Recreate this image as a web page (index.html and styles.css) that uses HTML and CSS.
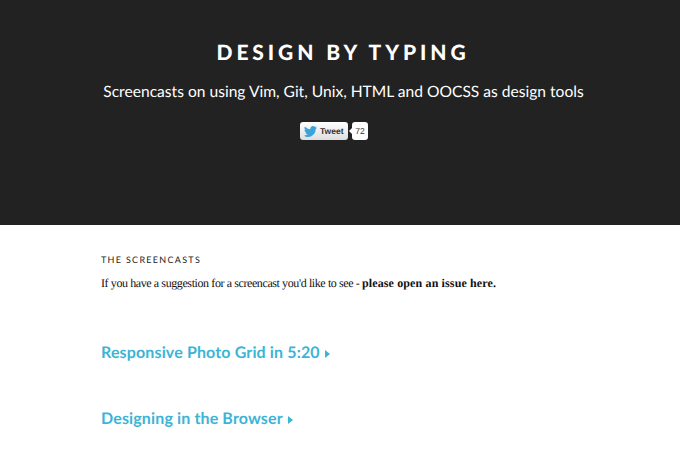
FILE: index.html
```html
<!DOCTYPE html>
<html lang="en">
<head>
    <meta charset="UTF-8">
    <title>Design by Typing</title>
    <link rel="stylesheet" href="styles.css">
</head>
<body>
    <header class="masthead">
        <h1 class="site-title">DESIGN BY TYPING</h1>
        <p class="site-tagline">Screencasts on using Vim, Git, Unix, HTML and OOCSS as design tools</p>
        <div class="share">
            <a class="tweet-btn" href="#">
                <svg class="tweet-bird" viewBox="0 0 24 20" width="13" height="11"><path d="M24 2.4c-.9.4-1.8.7-2.8.8 1-.6 1.8-1.6 2.2-2.7-1 .6-2 1-3.1 1.2C19.300.7 18 0 16.600 0c-2.700 0-4.900 2.200-4.900 4.900 0 .4 0 .8.100 1.100C7.700 5.800 4.100 3.900 1.700.9 1.300 1.600 1 2.500 1 3.400c0 1.700.9 3.200 2.200 4.100-.8 0-1.600-.2-2.200-.6v.1c0 2.400 1.700 4.400 3.900 4.800-.4.100-.8.200-1.300.2-.3 0-.6 0-.9-.1.600 2 2.400 3.400 4.600 3.400-1.700 1.300-3.800 2.100-6.100 2.100-.4 0-.8 0-1.200-.1C2.200 19.300 4.800 20 7.500 20c9.100 0 14-7.500 14-14v-.6c1-.7 1.800-1.600 2.500-3z"/></svg>
                Tweet
            </a>
            <span class="tweet-count">72</span>
        </div>
    </header>

    <main class="content">
        <h2 class="section-label">THE SCREENCASTS</h2>
        <p class="intro">If you have a suggestion for a screencast you'd like to see - <a href="#">please open an issue here.</a></p>

        <ul class="casts">
            <li><a href="#">Responsive Photo Grid in 5:20<span class="arrow"></span></a></li>
            <li><a href="#">Designing in the Browser<span class="arrow"></span></a></li>
        </ul>
    </main>
</body>
</html>
```

FILE: styles.css
```css
html, body {
    margin: 0;
    padding: 0;
}
body {
    background: #fff;
    overflow: hidden;
    font-family: Lato, "Open Sans", sans-serif;
    text-rendering: geometricPrecision;
}
.masthead {
    height: 225px;
    box-sizing: border-box;
    padding-top: 40px;
    background: #222222;
    color: #fff;
    text-align: center;
}
.site-title {
    margin: 0;
    padding-left: 6px;
    font-size: 21px;
    line-height: 26px;
    font-weight: 900;
    letter-spacing: 3.9px;
}
.site-tagline {
    margin: 14px 0 0;
    padding-left: 7px;
    font-size: 15.6px;
    line-height: 24px;
}
.share {
    display: flex;
    justify-content: center;
    align-items: center;
    gap: 4px;
    margin-top: 18px;
    padding-right: 12px;
}
.tweet-btn {
    display: flex;
    align-items: center;
    gap: 3px;
    width: 48px;
    height: 18px;
    box-sizing: border-box;
    padding-left: 4px;
    border-radius: 3px;
    background: linear-gradient(#ffffff, #dedede);
    color: #333;
    font: bold 8.5px "Liberation Sans", Arial, sans-serif;
    text-decoration: none;
}
.tweet-bird {
    fill: #3aa3d8;
}
.tweet-count {
    position: relative;
    width: 16px;
    height: 18px;
    border-radius: 3px;
    background: #fff;
    color: #333;
    font: 8.5px/18px "Liberation Sans", Arial, sans-serif;
    text-align: center;
}
.tweet-count::before {
    content: "";
    position: absolute;
    left: -3px;
    top: 6px;
    border-style: solid;
    border-width: 3px 3px 3px 0;
    border-color: transparent #fff transparent transparent;
}
.content {
    padding: 0 101px;
}
.section-label {
    margin: 29px 0 0;
    font-size: 9px;
    line-height: 12px;
    font-weight: 400;
    letter-spacing: 1.3px;
    color: #222;
}
.intro {
    margin: 9px 0 0;
    font-family: "Liberation Serif", serif;
    font-size: 12px;
    line-height: 16px;
    letter-spacing: -0.4px;
    color: #111;
}
.intro a {
    font-weight: bold;
    letter-spacing: 0.13px;
    color: #111;
    text-decoration: none;
}
.casts {
    list-style: none;
    margin: 51px 0 0;
    padding: 0;
}
.casts li {
    margin-bottom: 44px;
    font-size: 16px;
    line-height: 22px;
    font-weight: 700;
    letter-spacing: 0.14px;
}
.casts a {
    color: #3cb4d6;
    text-decoration: none;
}
.arrow {
    display: inline-block;
    margin-left: 5px;
    border-style: solid;
    border-width: 4.5px 0 4.5px 5px;
    border-color: transparent transparent transparent #3cb4d6;
}
```
